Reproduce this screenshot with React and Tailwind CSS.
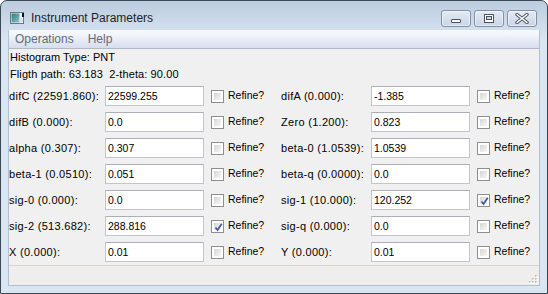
const rows = [
  [{ label: "difC (22591.860):", value: "22599.255" }, { label: "difA (0.000):", value: "-1.385" }],
  [{ label: "difB (0.000):", value: "0.0" }, { label: "Zero (1.200):", value: "0.823" }],
  [{ label: "alpha (0.307):", value: "0.307" }, { label: "beta-0 (1.0539):", value: "1.0539" }],
  [{ label: "beta-1 (0.0510):", value: "0.051" }, { label: "beta-q (0.0000):", value: "0.0" }],
  [{ label: "sig-0 (0.000):", value: "0.0" }, { label: "sig-1 (10.000):", value: "120.252", checked: true }],
  [{ label: "sig-2 (513.682):", value: "288.816", checked: true }, { label: "sig-q (0.000):", value: "0.0" }],
  [{ label: "X (0.000):", value: "0.01" }, { label: "Y (0.000):", value: "0.01" }],
];

function CheckBox({ checked }) {
  return (
    <div className="relative w-[13px] h-[13px] border border-[#8e8f8f] bg-white p-[2px] shrink-0">
      <div className="w-full h-full bg-linear-to-br from-[#d6d6d6] to-[#f7f7f7]" />
      {checked && (
        <svg className="absolute left-[1px] top-[1px]" width="11" height="11" viewBox="0 0 11 11">
          <path d="M2.5 5.5 L4.5 8 L8.8 1.8" fill="none" stroke="#3f5a94" strokeWidth="1.7" />
        </svg>
      )}
    </div>
  );
}

function Field({ label, value, checked, labelW, textW }) {
  return (
    <>
      <div className={`${labelW} shrink-0 text-[11px] tracking-[0.3px] text-black whitespace-nowrap`}>{label}</div>
      <div className="w-[99px] h-[20px] shrink-0 bg-white border border-[#c3c5ca] border-t-[#acafb5] pl-[2px] leading-[18px] text-black">
        {value}
      </div>
      <div className="ml-[7px]">
        <CheckBox checked={checked} />
      </div>
      <div className={`ml-[4px] ${textW} shrink-0`}>Refine?</div>
    </>
  );
}

function WinButton({ children }) {
  return (
    <div className="w-[30px] h-[17px] rounded-[3px] border border-[#8190a6] bg-linear-to-b from-[#e4ebf4] to-[#c8d5e5] flex items-center justify-center shadow-[inset_0_0_0_1px_rgba(255,255,255,0.5)]">
      {children}
    </div>
  );
}

export default function App() {
  return (
    <div
      className="w-[548px] h-[294px] flex flex-col border border-[#3d4855] rounded-t-[7px] bg-linear-to-b from-[#bccddf] to-[#dbe6f3] to-[14%] overflow-hidden"
      style={{ fontFamily: '"Liberation Sans", Arial, sans-serif' }}
    >
      {/* title bar */}
      <div className="h-[29px] flex shrink-0">
        <div className="flex items-center pl-[9px] pt-[4px]">
          <svg width="15" height="12" viewBox="0 0 15 12">
            <defs>
              <linearGradient id="ig" x1="0" y1="0" x2="1" y2="1">
                <stop offset="0" stopColor="#2a7e6c" />
                <stop offset="1" stopColor="#8fc4d6" />
              </linearGradient>
            </defs>
            <rect x="0.5" y="0.5" width="13" height="11" fill="#eef2f6" stroke="#66788a" />
            <rect x="1.5" y="1.5" width="8" height="9" fill="url(#ig)" />
            <rect x="9.5" y="6.5" width="3" height="4" fill="#d8e2ea" />
            <rect x="12" y="1" width="2" height="4" fill="#111" />
          </svg>
          <span className="ml-[6px] text-[12px] text-[#1e1e1e]">Instrument Parameters</span>
        </div>
        <div className="ml-auto mr-[10px] mt-[9px] flex gap-[3px] self-start">
          <WinButton>
            <svg width="12" height="12" viewBox="0 0 12 12">
              <rect x="1.5" y="6.5" width="9" height="3" rx="0.5" fill="#fff" stroke="#4a5464" />
            </svg>
          </WinButton>
          <WinButton>
            <svg width="12" height="11" viewBox="0 0 12 11">
              <rect x="1.5" y="1.5" width="9" height="8" fill="#fff" stroke="#4a5464" />
              <rect x="3.5" y="3.5" width="5" height="3" fill="#cfd9e6" stroke="#4a5464" />
            </svg>
          </WinButton>
          <WinButton>
            <svg width="14" height="11" viewBox="0 0 14 11">
              <path d="M2 1.5 L12 9.5 M12 1.5 L2 9.5" stroke="#4a5464" strokeWidth="3.4" strokeLinecap="round" />
              <path d="M2 1.5 L12 9.5 M12 1.5 L2 9.5" stroke="#fff" strokeWidth="1.6" strokeLinecap="round" />
            </svg>
          </WinButton>
        </div>
      </div>

      {/* client */}
      <div className="mx-[7px] flex-1 flex flex-col bg-[#f0f0f0] border-x border-b border-[#b3c0cf] text-[10.5px]">
        <div className="h-[19px] shrink-0 flex items-center bg-linear-to-b from-[#f4f7fc] from-[20%] to-[#d7ddf0] border-b border-[#b0b8cb] text-[12px] text-[#646b78]">
          <span className="px-[6px]">Operations</span>
          <span className="px-[8px]">Help</span>
        </div>
        <div className="h-[17px] leading-[17px] pl-[1px] text-[11px]">Histogram Type: PNT</div>
        <div className="h-[17px] leading-[17px] pl-[1px] text-[11px] tracking-[0.1px] whitespace-pre">Fligth path: 63.183  2-theta: 90.00</div>
        <div className="mt-[3px] flex flex-col gap-[6px]">
          {rows.map(([l, r], i) => (
            <div key={i} className="flex items-center h-[20px]">
              <Field {...l} labelW="w-[96px]" textW="w-[53px]" />
              <Field {...r} labelW="w-[90px]" textW="w-[40px]" />
            </div>
          ))}
        </div>
        <div className="flex-1" />
        <div className="h-[20px] shrink-0 bg-[#efeeec] border-t border-[#d7d6d3] relative">
          <svg className="absolute right-[1px] bottom-[1px]" width="11" height="11" viewBox="0 0 11 11">
            {[[8, 2], [5, 5], [8, 5], [2, 8], [5, 8], [8, 8]].map(([x, y], k) => (
              <g key={k}>
                <rect x={x + 1} y={y + 1} width="1.5" height="1.5" fill="#fff" />
                <rect x={x} y={y} width="1.5" height="1.5" fill="#b4b3b0" />
              </g>
            ))}
          </svg>
        </div>
      </div>
      <div className="h-[7px] shrink-0" />
    </div>
  );
}
